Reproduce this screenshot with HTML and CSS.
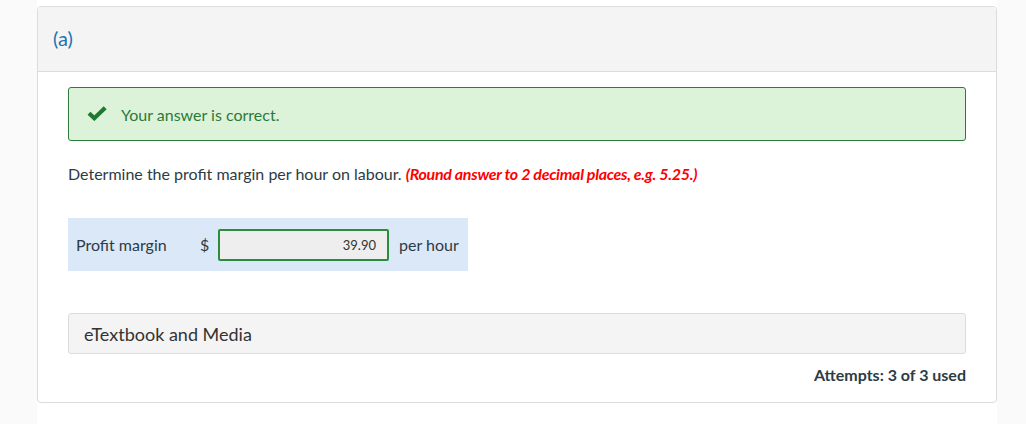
FILE: index.html
```html
<!DOCTYPE html>
<html>
<head>
<meta charset="utf-8">
<link rel="stylesheet" href="styles.css">
</head>
<body>
<div class="page">
  <div class="card">
    <div class="card-header"><span class="part">(a)</span></div>
    <div class="card-body">
      <div class="alert">
        <svg class="check" viewBox="0 0 20 15" width="20" height="15"><path fill="none" stroke="#1f7a30" stroke-width="4.2" stroke-linejoin="miter" d="M2 7.2 L7.3 12.2 L18.2 1.8"/></svg>
        <span class="alert-text">Your answer is correct.</span>
      </div>
      <p class="question">Determine the profit margin per hour on labour. <em class="hint">(Round answer to 2 decimal places, e.g. 5.25.)</em></p>
      <div class="answer-row">
        <span class="label">Profit margin</span>
        <span class="currency">$</span>
        <span class="input">39.90</span>
        <span class="unit">per hour</span>
      </div>
      <div class="media">eTextbook and Media</div>
      <div class="attempts">Attempts: 3 of 3 used</div>
    </div>
  </div>
</div>
</body>
</html>
```

FILE: styles.css
```css
html, body {
  margin: 0;
  padding: 0;
}
body {
  background: #fafafa;
  font-family: Lato, "Open Sans", "Liberation Sans", sans-serif;
  color: #2d3b45;
}
.page {
  margin-left: 37px;
  width: 960px;
  min-height: 424px;
  background: #ffffff;
  padding-top: 6px;
  box-sizing: border-box;
}
.card {
  border: 1px solid #dcdcdc;
  border-radius: 4px;
  overflow: hidden;
}
.card-header {
  height: 64px;
  background: #f4f4f4;
  border-bottom: 1px solid #dcdcdc;
  display: flex;
  align-items: center;
  padding-left: 15px;
}
.part {
  color: #1a73b5;
  font-size: 20px;
  margin-top: -2px;
}
.card-body {
  padding: 15px 30px 18px 30px;
}
.alert {
  height: 52px;
  border: 1px solid #2c7b3c;
  border-radius: 3px;
  background: #dcf3d9;
  display: flex;
  align-items: center;
  padding-left: 18px;
}
.check {
  display: block;
  margin-top: -2px;
}
.alert-text {
  color: #2b7a3b;
  font-size: 16px;
  margin-left: 14px;
  margin-top: 0;
}
.question {
  margin: 22px 0 0 0;
  font-size: 16px;
  line-height: 22px;
  color: #2d3b45;
}
.hint {
  color: #ff0000;
  font-weight: bold;
  font-style: italic;
  letter-spacing: -0.3px;
}
.answer-row {
  margin-top: 33px;
  width: 400px;
  height: 53px;
  background: #dbe8f8;
  display: flex;
  align-items: center;
  box-sizing: border-box;
  padding-left: 8px;
  font-size: 16px;
}
.label {
  width: 124px;
}
.currency {
  width: 18px;
}
.input {
  width: 171px;
  height: 32px;
  box-sizing: border-box;
  border: 2px solid #2c8b3c;
  border-radius: 2px;
  background: #eeeeee;
  display: flex;
  align-items: center;
  justify-content: flex-end;
  padding-right: 11px;
  font-size: 13px;
  color: #333;
}
.unit {
  margin-left: 10px;
}
.media {
  margin-top: 42px;
  height: 41px;
  box-sizing: border-box;
  border: 1px solid #dcdcdc;
  border-radius: 3px;
  background: #f4f4f4;
  display: flex;
  align-items: center;
  padding-left: 15px;
  font-size: 18px;
  color: #333;
}
.attempts {
  margin-top: 11px;
  text-align: right;
  font-weight: bold;
  font-size: 16px;
  color: #2d3b45;
}
```
